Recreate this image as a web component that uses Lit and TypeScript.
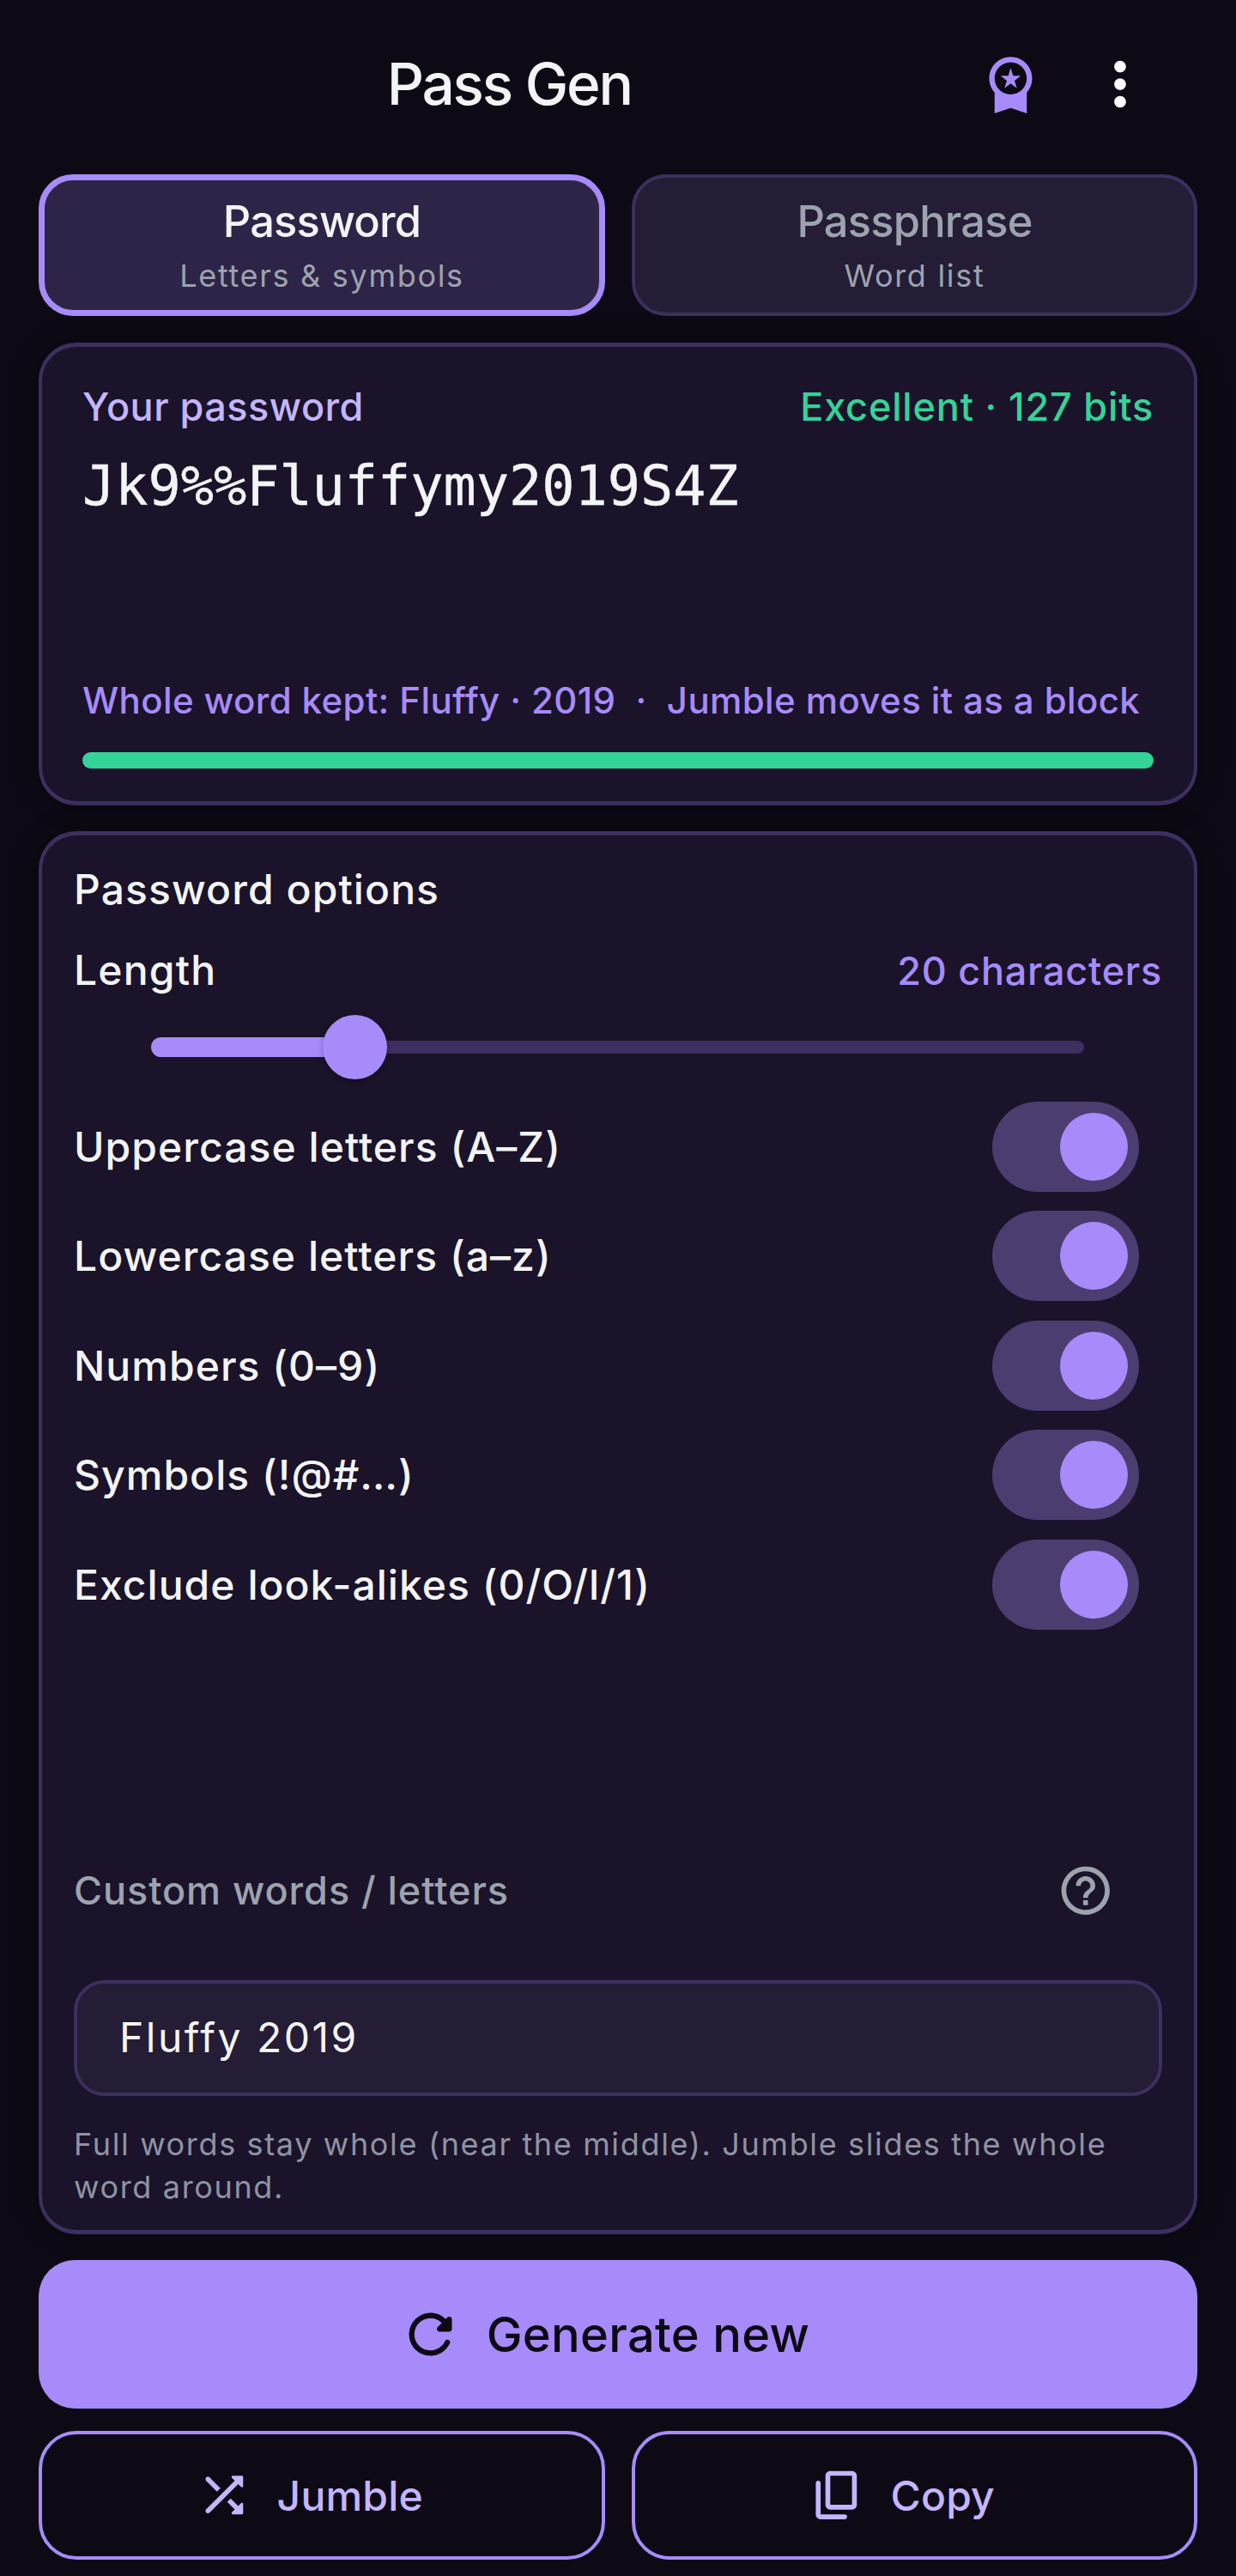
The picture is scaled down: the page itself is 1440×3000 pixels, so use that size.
import { LitElement, html, css } from "lit";
import { customElement } from "lit/decorators.js";

const icon = (d: string, cls: string) => html`<svg class=${cls} viewBox="0 0 24 24" fill="currentColor" aria-hidden="true"><path d=${d}></path></svg>`;

const PREMIUM = "M9.68 13.69 12 11.93l2.31 1.76-.88-2.85L15.75 9h-2.84L12 6.19 11.09 9H8.25l2.31 1.84-.88 2.85zM20 10c0-4.42-3.58-8-8-8s-8 3.58-8 8c0 2.03.76 3.87 2 5.28V23l6-2 6 2v-7.72c1.24-1.41 2-3.25 2-5.28zm-8-6c3.31 0 6 2.69 6 6s-2.69 6-6 6-6-2.69-6-6 2.69-6 6-6z";
const MORE = "M12 8c1.1 0 2-.9 2-2s-.9-2-2-2-2 .9-2 2 .9 2 2 2zm0 2c-1.1 0-2 .9-2 2s.9 2 2 2 2-.9 2-2-.9-2-2-2zm0 6c-1.1 0-2 .9-2 2s.9 2 2 2 2-.9 2-2-.9-2-2-2z";
const HELP = "M11 18h2v-2h-2v2zm1-16C6.48 2 2 6.48 2 12s4.48 10 10 10 10-4.48 10-10S17.52 2 12 2zm0 18c-4.41 0-8-3.59-8-8s3.59-8 8-8 8 3.59 8 8-3.59 8-8 8zm0-14c-2.21 0-4 1.79-4 4h2c0-1.1.9-2 2-2s2 .9 2 2c0 2-3 1.75-3 5h2c0-2.25 3-2.5 3-5 0-2.21-1.79-4-4-4z";
const REFRESH = "M17.65 6.35c-1.63-1.63-3.94-2.57-6.48-2.31-3.67.37-6.69 3.35-7.1 7.02C3.52 15.91 7.27 20 12 20c3.19 0 5.93-1.87 7.21-4.56.32-.67-.16-1.44-.9-1.44-.37 0-.72.2-.88.53-1.13 2.43-3.84 3.97-6.8 3.31-2.22-.49-4.01-2.3-4.48-4.52C5.31 9.44 8.26 6 12 6c1.66 0 3.14.69 4.22 1.78l-1.51 1.51c-.63.63-.19 1.71.7 1.71H19c.55 0 1-.45 1-1V6.41c0-.89-1.08-1.34-1.71-.71l-.64.65z";
const SHUFFLE = "M10.59 9.17L6.12 4.7a.9959.9959 0 00-1.41 0c-.39.39-.39 1.02 0 1.41l4.46 4.46 1.42-1.4zm4.76-4.32l1.19 1.19L4.7 17.88c-.39.39-.39 1.02 0 1.41.39.39 1.02.39 1.41 0L17.96 7.46l1.19 1.19c.31.31.85.09.85-.36V4.5c0-.28-.22-.5-.5-.5h-3.79c-.45 0-.67.54-.36.85zm-.52 8.56l-1.41 1.41 3.13 3.13-1.2 1.2c-.31.31-.09.85.36.85h3.79c.28 0 .5-.22.5-.5v-3.79c0-.45-.54-.67-.85-.35l-1.19 1.19-3.13-3.14z";
const COPY = "M15 20H5V7c0-.55-.45-1-1-1s-1 .45-1 1v13c0 1.1.9 2 2 2h10c.55 0 1-.45 1-1s-.45-1-1-1zm5-4V4c0-1.1-.9-2-2-2H9c-1.1 0-2 .9-2 2v12c0 1.1.9 2 2 2h9c1.1 0 2-.9 2-2zm-2 0H9V4h9v12z";

const TOGGLES = [
  "Uppercase letters (A–Z)",
  "Lowercase letters (a–z)",
  "Numbers (0–9)",
  "Symbols (!@#…)",
  "Exclude look-alikes (0/O/l/1)",
];

@customElement("app-root")
export class AppRoot extends LitElement {
  static styles = css`
    :host {
      display: block;
      min-height: 3000px;
      background: #0d0a15;
      color: #f3f4f6;
      font-family: Inter, "Noto Sans", sans-serif;
    }
    * { box-sizing: border-box; }
    .page {
      display: flex;
      flex-direction: column;
      padding: 0 45px;
    }
    .header {
      display: flex;
      align-items: center;
      height: 195px;
    }
    .title {
      flex: 1;
      margin: 0;
      padding-left: 2px;
      font-size: 67.5px;
      font-weight: 500;
      letter-spacing: -2.2px;
      text-align: center;
      line-height: 80px;
      color: #f3f4f6;
    }
    .medal { width: 75px; height: 75px; color: #a78bfa; display: block; }
    .more { width: 82px; height: 82px; color: #fff; display: block; margin: 0 49px 0 49.5px; }
    .tabs {
      display: grid;
      grid-template-columns: 660px 659px;
      gap: 31px;
      margin-top: 8px;
    }
    .tab {
      height: 165px;
      border-radius: 40px;
      border: 4px solid #3d2f5f;
      background: #241d35;
      color: #9ca3af;
      display: flex;
      flex-direction: column;
      align-items: center;
      justify-content: center;
    }
    .tab.on {
      border: 7px solid #a78bfa;
      background: #2e2447;
      color: #f3f4f6;
    }
    .tab-name { font-size: 50.6px; font-weight: 500; letter-spacing: -0.8px; line-height: 64px; }
    .tab-sub { margin-top: 7px; font-size: 36px; letter-spacing: 1.7px; line-height: 48px; color: #9ca3af; }
    .card {
      border-style: solid;
      border-color: #3d2f5f;
      border-width: 5px 4px;
      border-radius: 44px;
      background: #1a1329;
      box-shadow: 0 0 30px rgba(0, 0, 0, 0.35);
    }
    .result {
      margin-top: 31px;
      padding: 40px 47px 38px;
    }
    .result-top {
      display: flex;
      justify-content: space-between;
      font-size: 45px;
      line-height: 60px;
      font-weight: 500;
    }
    .your { color: #c4b5fd; letter-spacing: 0.5px; }
    .score { color: #34d399; letter-spacing: 0.83px; }
    .pw {
      margin-top: 22px;
      font-family: "DejaVu Sans Mono", monospace;
      font-size: 63.5px;
      line-height: 80px;
      color: #f3f4f6;
      -webkit-text-stroke: 0.4px #f3f4f6;
    }
    .kept {
      margin-top: 184px;
      font-size: 42px;
      font-weight: 500;
      letter-spacing: 0.39px;
      line-height: 52px;
      color: #a78bfa;
      white-space: pre;
    }
    .bar {
      height: 19px;
      margin-top: 34px;
      border-radius: 10px;
      background: #34d399;
    }
    .options {
      margin-top: 30px;
      padding: 31px 37px 25px;
    }
    .opt-title { font-size: 48px; font-weight: 450; letter-spacing: 1.1px; line-height: 64px; }
    .length {
      display: flex;
      justify-content: space-between;
      align-items: baseline;
      margin-top: 30px;
      font-size: 48px;
      font-weight: 450;
      letter-spacing: 1.2px;
      line-height: 64px;
    }
    .count { font-size: 45px; font-weight: 500; letter-spacing: 0.75px; color: #a78bfa; }
    .slider {
      position: relative;
      display: flex;
      align-items: center;
      height: 75px;
      margin: 19px 91px 0 90px;
    }
    .fill {
      height: 23px;
      width: 237px;
      border-radius: 12px 0 0 12px;
      background: #a78bfa;
    }
    .rest {
      flex: 1;
      height: 15px;
      border-radius: 0 8px 8px 0;
      background: #3d2f5f;
    }
    .thumb {
      position: absolute;
      left: 200px;
      top: 0;
      width: 75px;
      height: 75px;
      border-radius: 50%;
      background: #a78bfa;
      box-shadow: 0 2px 6px rgba(0, 0, 0, 0.3);
    }
    .toggles {
      display: flex;
      flex-direction: column;
      gap: 22.5px;
      margin-top: 25.5px;
    }
    .row {
      display: flex;
      align-items: center;
      justify-content: space-between;
      height: 105px;
      font-size: 48px;
      font-weight: 450;
      letter-spacing: 1.05px;
    }
    .switch {
      display: flex;
      align-items: center;
      justify-content: flex-end;
      width: 171px;
      height: 105px;
      margin-right: 27px;
      padding-right: 13px;
      border-radius: 53px;
      background: #4b3d70;
    }
    .knob { width: 79px; height: 79px; border-radius: 50%; background: #a78bfa; }
    .custom {
      display: flex;
      align-items: center;
      justify-content: space-between;
      margin-top: 270px;
      font-size: 45px;
      font-weight: 500;
      letter-spacing: 0.95px;
      color: #9ca3af;
    }
    .help { width: 67.5px; height: 67.5px; margin-right: 56px; display: block; }
    .input {
      display: flex;
      align-items: center;
      height: 135px;
      margin-top: 71px;
      padding: 0 49px 2px;
      border: 4px solid #3d2f5f;
      border-radius: 36px;
      background: #241d35;
      font-size: 48px;
      letter-spacing: 2.5px;
    }
    .note {
      margin: 31px 0 0;
      font-size: 36px;
      line-height: 50px;
      letter-spacing: 1.65px;
      color: #8f93a3;
    }
    .gen {
      display: flex;
      align-items: center;
      justify-content: center;
      gap: 28px;
      height: 173px;
      margin-top: 30px;
      padding-right: 33px;
      border-radius: 42px;
      background: #a78bfa;
      color: #0d0a15;
      font-size: 56px;
      font-weight: 500;
      letter-spacing: 0.3px;
    }
    .gen svg { width: 75px; height: 75px; display: block; }
    .actions {
      display: grid;
      grid-template-columns: 660px 659px;
      gap: 31px;
      margin-top: 26px;
    }
    .act {
      display: flex;
      align-items: center;
      justify-content: center;
      gap: 28px;
      height: 150px;
      padding-right: 30px;
      border: 4px solid #a78bfa;
      border-radius: 44px;
      color: #c4b5fd;
      font-size: 48px;
      font-weight: 500;
      letter-spacing: 0.2px;
    }
    .act svg { width: 67.5px; height: 67.5px; display: block; }
  `;

  render() {
    return html`
      <div class="page">
        <header class="header">
          <h1 class="title">Pass Gen</h1>
          ${icon(PREMIUM, "medal")}
          ${icon(MORE, "more")}
        </header>

        <div class="tabs">
          <div class="tab on">
            <span class="tab-name">Password</span>
            <span class="tab-sub">Letters &amp; symbols</span>
          </div>
          <div class="tab">
            <span class="tab-name">Passphrase</span>
            <span class="tab-sub">Word list</span>
          </div>
        </div>

        <section class="card result">
          <div class="result-top">
            <span class="your">Your password</span>
            <span class="score">Excellent · 127 bits</span>
          </div>
          <div class="pw">Jk9%%Fluffymy2019S4Z</div>
          <div class="kept">Whole word kept: Fluffy · 2019  ·  Jumble moves it as a block</div>
          <div class="bar"></div>
        </section>

        <section class="card options">
          <div class="opt-title">Password options</div>
          <div class="length">
            <span>Length</span>
            <span class="count">20 characters</span>
          </div>
          <div class="slider">
            <div class="fill"></div>
            <div class="rest"></div>
            <div class="thumb"></div>
          </div>
          <div class="toggles">
            ${TOGGLES.map(
              (t) => html`<div class="row"><span>${t}</span><span class="switch"><span class="knob"></span></span></div>`
            )}
          </div>
          <div class="custom">
            <span>Custom words / letters</span>
            ${icon(HELP, "help")}
          </div>
          <div class="input">Fluffy 2019</div>
          <p class="note">Full words stay whole (near the middle). Jumble slides the whole word around.</p>
        </section>

        <div class="gen">${icon(REFRESH, "")}<span>Generate new</span></div>

        <div class="actions">
          <div class="act">${icon(SHUFFLE, "")}<span>Jumble</span></div>
          <div class="act">${icon(COPY, "")}<span>Copy</span></div>
        </div>
      </div>
    `;
  }
}
